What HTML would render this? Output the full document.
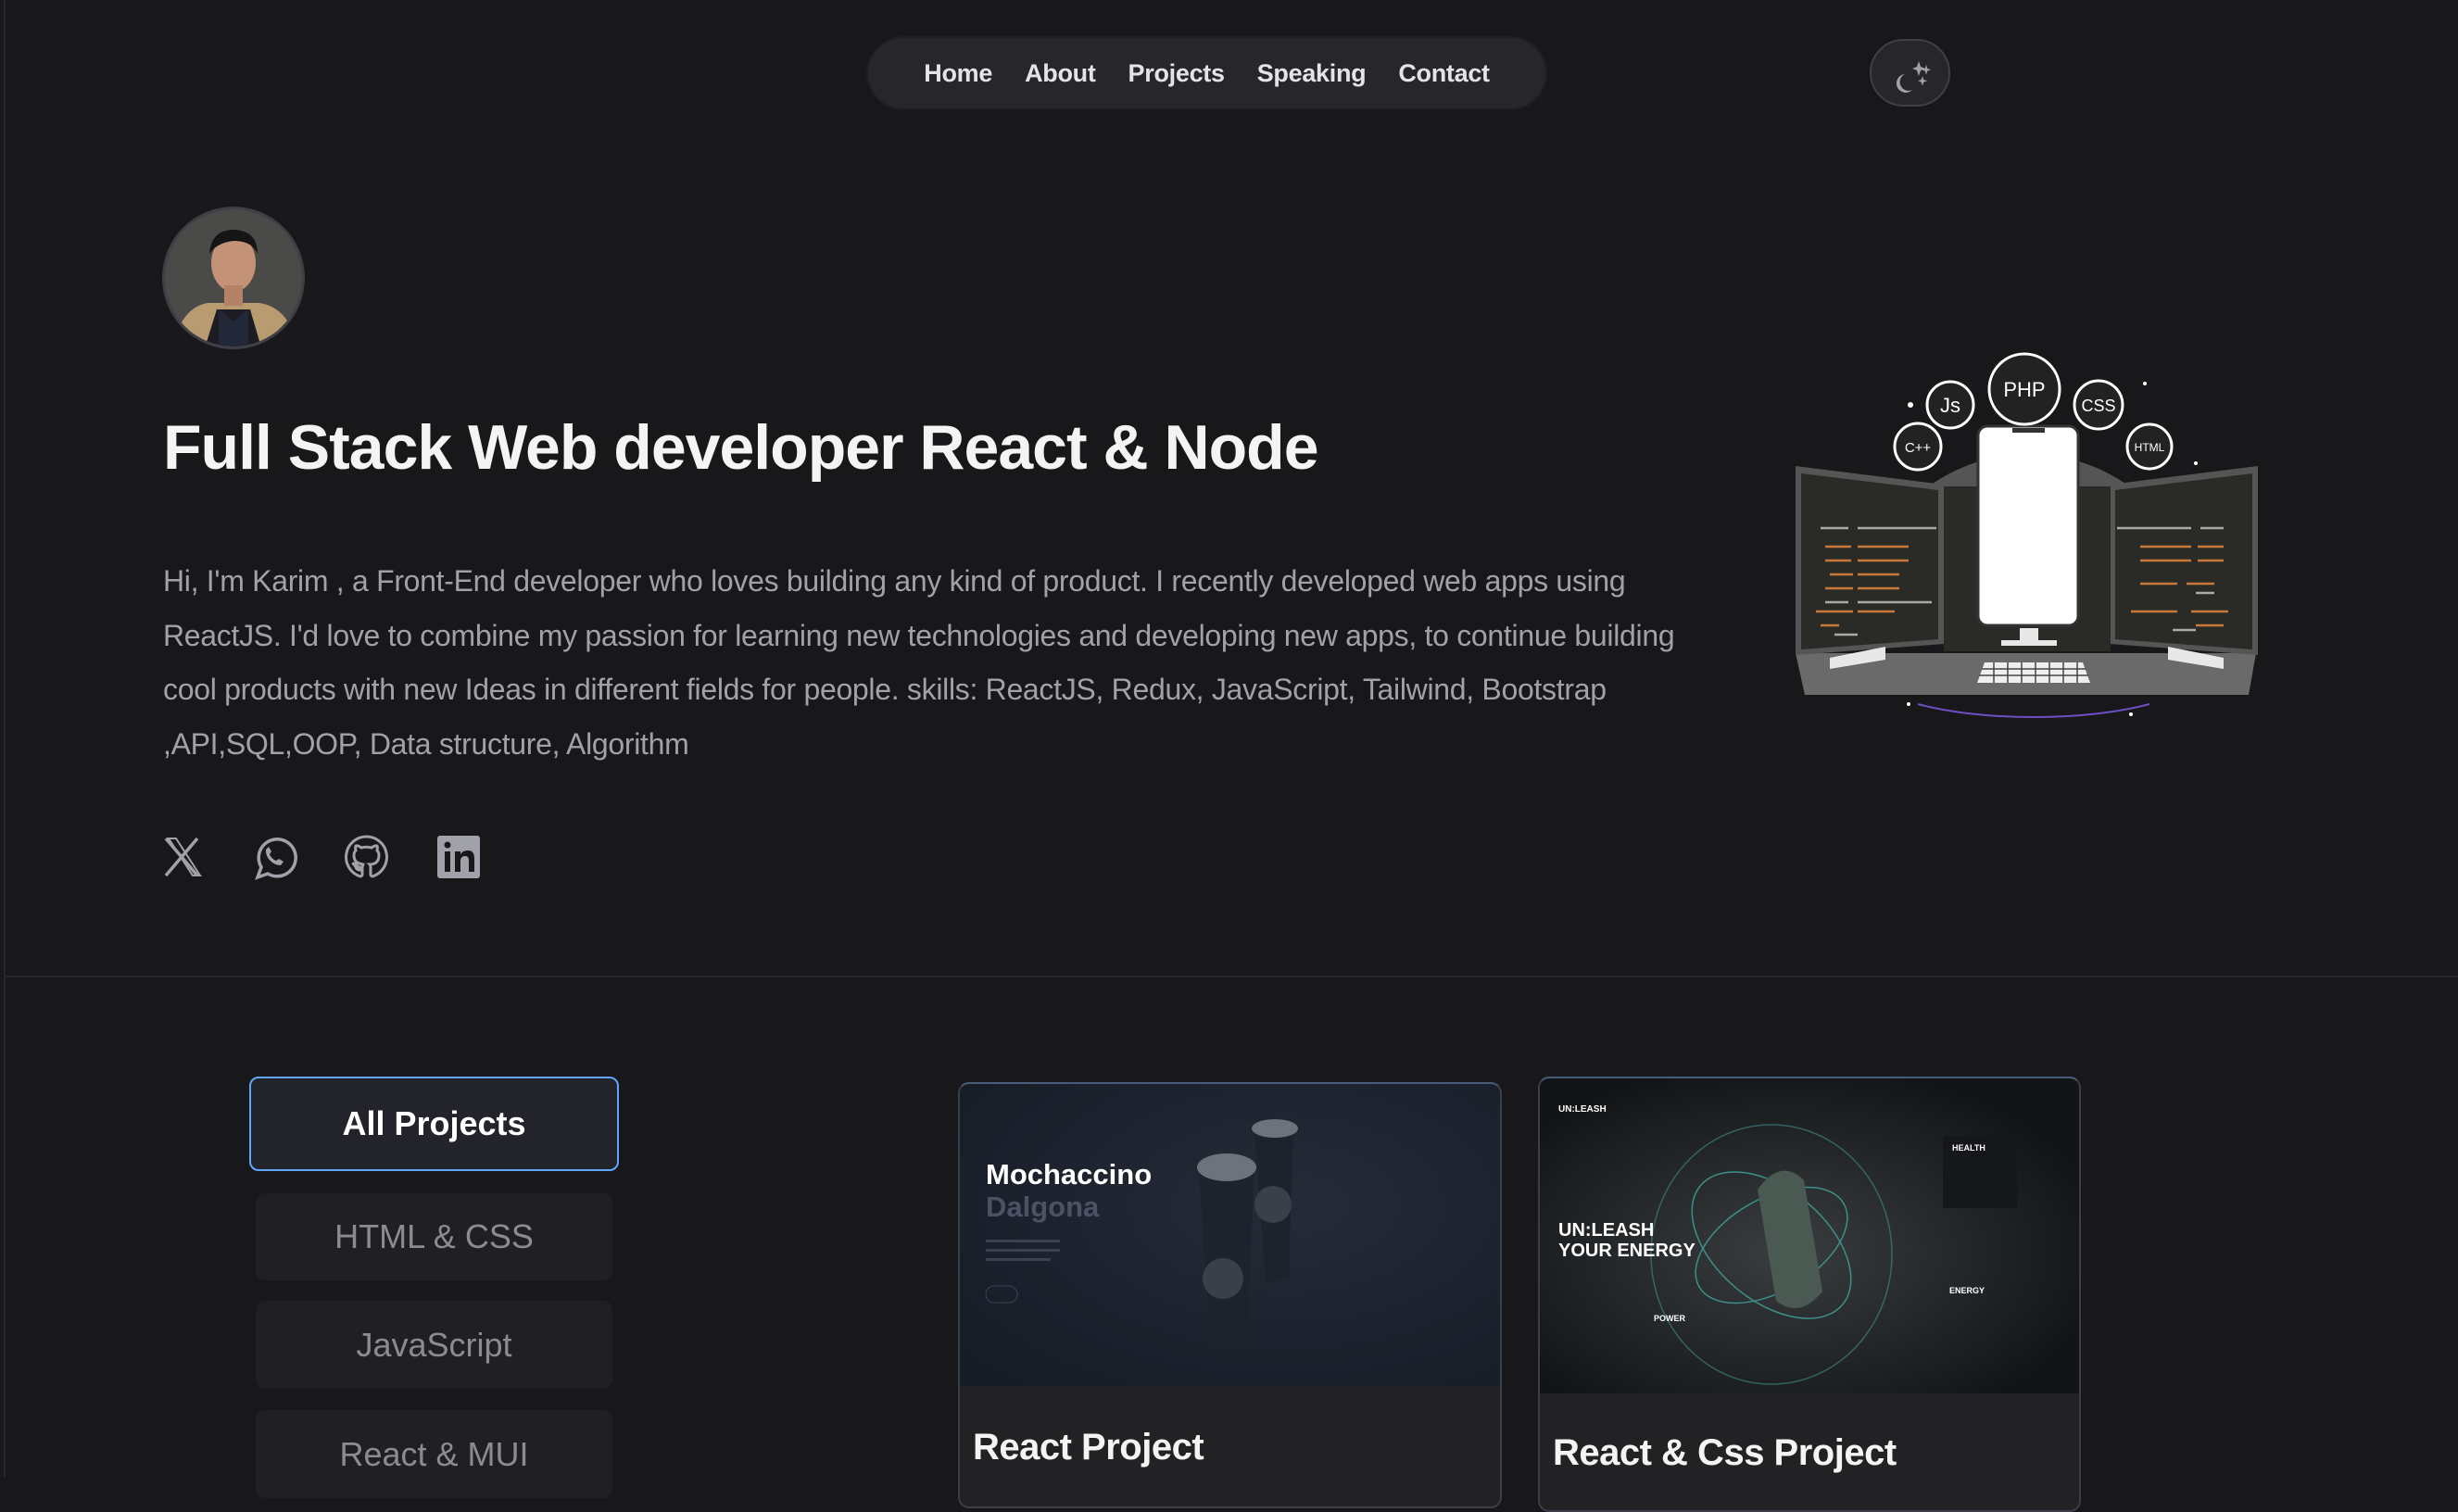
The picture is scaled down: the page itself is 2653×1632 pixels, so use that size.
<!DOCTYPE html>
<html><head><meta charset="utf-8"><style>
*{margin:0;padding:0;box-sizing:border-box}
body{width:2653px;height:1594px;background:#18181b;font-family:"Liberation Sans",Arial,sans-serif;position:relative;overflow:hidden}
.abs{position:absolute}
.vline{left:4px;top:0;width:2px;height:1594px;background:#27272a}
.nav{left:937px;top:41px;width:731px;height:76px;border-radius:38px;background:#27272a;box-shadow:0 0 0 2px #1f1f22;display:flex;align-items:center;justify-content:center;gap:35px;font-size:27px;font-weight:bold;color:#e4e4e7;letter-spacing:-0.3px}
.theme{left:2018px;top:42px;width:87px;height:73px;border-radius:37px;border:2px solid #3f3f46;background:#27272a}
h1{position:absolute;left:176px;top:444px;font-size:68px;color:#f4f4f5;font-weight:bold;letter-spacing:-1px;white-space:nowrap}
.p{left:176px;top:598px;font-size:32px;line-height:58.5px;color:#a1a1aa;white-space:nowrap;letter-spacing:-0.3px}
.div{left:6px;top:1053px;width:2647px;height:2px;background:#27272a}
.btn{position:absolute;display:flex;align-items:center;justify-content:center;border-radius:10px;font-size:36px;background:#1f1f24;color:#8b8b93}
.card{position:absolute;border:2px solid #3b3f48;border-top-color:#4a5d78;border-radius:12px;background:#222225;overflow:hidden}
.ct{position:absolute;left:14px;font-size:40px;font-weight:bold;color:#f4f4f5;letter-spacing:-0.5px}
</style></head><body>
<div class="abs vline"></div>
<div class="abs nav"><span>Home</span><span>About</span><span>Projects</span><span>Speaking</span><span>Contact</span></div>
<div class="abs theme"><svg width="87" height="73" viewBox="0 0 87 73"><path d="M36 36a10 10 0 1 0 8 17a9 9 0 0 1-8-17z" fill="#a1a1aa"/><path d="M51 22l2 6 5 2-5 2-2 6-2-6-5-2 5-2z M59 26l1.3 4 3.7 1.3-3.7 1.3-1.3 4-1.3-4-3.7-1.3 3.7-1.3z M55 38l1.3 4 3.7 1.3-3.7 1.3-1.3 4-1.3-4-3.7-1.3 3.7-1.3z" fill="#a1a1aa"/></svg></div>

<svg class="abs" style="left:174px;top:222px" width="156" height="156" viewBox="0 0 156 156">
<defs><clipPath id="c"><circle cx="78" cy="78" r="74"/></clipPath></defs>
<circle cx="78" cy="78" r="77" fill="#3f3f46"/>
<g clip-path="url(#c)"><rect width="156" height="156" fill="#4a4a48"/>
<path d="M10 160 Q20 110 50 105 L106 105 Q140 110 150 160z" fill="#b89b70"/>
<path d="M45 160 L60 112 L96 112 L110 160z" fill="#1c1c22"/>
<path d="M62 112 L78 125 L94 112 L94 160 L62 160z" fill="#222838"/>
<ellipse cx="78" cy="62" rx="24" ry="31" fill="#c49277"/>
<path d="M52 52 Q54 25 80 26 Q104 28 104 52 Q98 38 78 38 Q60 40 52 52z" fill="#151515"/>
<rect x="68" y="86" width="20" height="22" fill="#b58268"/>
</g></svg>

<h1>Full Stack Web developer React &amp; Node</h1>
<div class="abs p">Hi, I'm Karim , a Front-End developer who loves building any kind of product. I recently developed web apps using<br>ReactJS. I'd love to combine my passion for learning new technologies and developing new apps, to continue building<br>cool products with new Ideas in different fields for people. skills: ReactJS, Redux, JavaScript, Tailwind, Bootstrap<br>,API,SQL,OOP, Data structure, Algorithm</div>

<svg class="abs" style="left:176px;top:900px" width="360" height="50" viewBox="0 0 360 50">
<g fill="none" stroke="#a1a1aa" stroke-width="3.5">
<path d="M3 5 L37 45 M37 5 L3 45" /><path d="M6 5h8l26 40h-8z" stroke-width="2"/>
<path d="M102 47 L106 36 A20 20 0 1 1 113 43 Z" stroke-width="3.5"/>
</g>
<path d="M111 17c-1 8 7 17 16 17l3-4-5-3-3 2c-3-1-6-4-7-7l2-3-3-5z" fill="#a1a1aa"/>
<path d="M220 3a22 22 0 0 0-7 43c1 0 2-1 2-2v-5c-6 1-7-3-7-3-1-2-2-3-2-3-2-1 0-1 0-1 2 0 3 2 3 2 2 3 5 2 6 2 0-1 1-2 1-3-5-1-10-2-10-10 0-2 1-4 2-5 0-1-1-3 0-5 0 0 2-1 6 2a20 20 0 0 1 11 0c4-3 6-2 6-2 1 2 0 4 0 5 1 1 2 3 2 5 0 8-5 10-10 10 1 1 1 2 1 4v7c0 1 1 2 2 2a22 22 0 0 0-7-43z" fill="none" stroke="#a1a1aa" stroke-width="3"/>
<rect x="296" y="2" width="46" height="46" rx="3" fill="#a1a1aa"/>
<rect x="304" y="19" width="6" height="22" fill="#18181b"/><circle cx="307" cy="12" r="3.5" fill="#18181b"/>
<path d="M315 19h6v3c2-3 5-4 8-4 5 0 7 3 7 9v14h-6V29c0-3-1-5-4-5s-5 2-5 5v12h-6z" fill="#18181b"/>
</svg>

<svg class="abs" style="left:1930px;top:375px" width="520" height="410" viewBox="0 0 520 410">
<path d="M60 290 A205 205 0 0 1 460 290" fill="none" stroke="#6d4fc4" stroke-width="2"/>
<path d="M140 385 A180 50 0 0 0 390 385" fill="none" stroke="#6d4fc4" stroke-width="2"/>
<path d="M75 300 A185 185 0 0 1 445 300 L445 320 L75 320z" fill="#555"/>
<g fill="#fff"><circle cx="132" cy="62" r="3"/><circle cx="385" cy="39" r="2"/><circle cx="440" cy="125" r="2"/><circle cx="30" cy="340" r="2"/><circle cx="130" cy="385" r="2"/><circle cx="370" cy="396" r="2"/></g>
<path d="M8 330 L505 330 L497 375 L18 375z" fill="#6a6a6a"/>
<path d="M8 128 L168 148 L168 320 L8 332z" fill="#555"/>
<path d="M14 136 L162 154 L162 315 L14 326z" fill="#2a2a26"/>
<path d="M507 128 L347 148 L347 320 L507 332z" fill="#555"/>
<path d="M501 136 L353 154 L353 315 L501 326z" fill="#2a2a26"/>
<rect x="168" y="150" width="180" height="178" fill="#2a2a26"/>
<g stroke="#c87838" stroke-width="2.5"><path d="M40 215h28M75 215h55M40 230h28M75 230h55M45 245h25M75 245h45M40 260h30M75 260h45M30 285h40M75 285h40M35 300h20M470 215h-28M435 215h-55M470 230h-28M435 230h-55M460 255h-30M420 255h-40M475 285h-40M420 285h-50M470 300h-30"/></g>
<g stroke="#aaa" stroke-width="2.5"><path d="M35 195h30M75 195h85M470 195h-25M435 195h-80M40 275h25M75 275h80M460 265h-20M50 310h25M440 305h-25"/></g>
<rect x="205" y="85" width="108" height="215" rx="10" fill="#fff" stroke="#333" stroke-width="3"/>
<path d="M242 87h35v5h-35z" fill="#333"/>
<rect x="250" y="303" width="20" height="15" fill="#e8e8e8"/><rect x="230" y="316" width="60" height="6" fill="#e8e8e8"/>
<path d="M45 335 l60-12 0 14-60 10z" fill="#e8e8e8"/><path d="M470 335 l-60-12 0 14 60 10z" fill="#e8e8e8"/>
<path d="M212 340 L318 340 L326 362 L204 362z" fill="#eee"/>
<g stroke="#444" stroke-width="1.5"><path d="M209 347h112M206 354h118"/><path d="M222 340v22M237 340v22M252 340v22M267 340v22M282 340v22M297 340v22M312 340v22"/></g>
<g stroke="#fff" stroke-width="3" fill="#222"><circle cx="140" cy="107" r="25"/><circle cx="175" cy="62" r="25"/><circle cx="255" cy="45" r="38"/><circle cx="335" cy="62" r="26"/><circle cx="390" cy="107" r="24"/></g>
<g fill="#fff" font-family="Liberation Sans,sans-serif" text-anchor="middle"><text x="140" y="113" font-size="15">C++</text><text x="175" y="70" font-size="22">Js</text><text x="255" y="53" font-size="22">PHP</text><text x="335" y="69" font-size="18">CSS</text><text x="390" y="112" font-size="12">HTML</text></g>
</svg>

<div class="abs div"></div>

<div class="btn" style="left:269px;top:1162px;width:399px;height:102px;border:2px solid #60a5fa;background:#23232b;color:#fff;font-weight:bold">All Projects</div>
<div class="btn" style="left:276px;top:1288px;width:385px;height:94px">HTML &amp; CSS</div>
<div class="btn" style="left:276px;top:1404px;width:385px;height:95px">JavaScript</div>
<div class="btn" style="left:276px;top:1522px;width:385px;height:95px">React &amp; MUI</div>

<div class="card" style="left:1034px;top:1168px;width:587px;height:460px">
<svg width="587" height="326" viewBox="0 0 587 326" style="display:block">
<defs><radialGradient id="g1" cx="0.6" cy="0.4" r="0.8"><stop offset="0" stop-color="#252b38"/><stop offset="1" stop-color="#161b26"/></radialGradient></defs>
<rect width="587" height="326" fill="url(#g1)"/>
<text x="28" y="108" font-family="Liberation Sans,sans-serif" font-weight="bold" font-size="31" fill="#fff">Mochaccino</text>
<text x="28" y="143" font-family="Liberation Sans,sans-serif" font-weight="bold" font-size="31" fill="#4a5264">Dalgona</text>
<g fill="#3a4150"><rect x="28" y="168" width="80" height="3"/><rect x="28" y="178" width="80" height="3"/><rect x="28" y="188" width="70" height="3"/></g>
<rect x="28" y="218" width="34" height="18" rx="9" fill="none" stroke="#3a4150"/>
<path d="M258 90 L318 85 L310 285 L270 290z" fill="#1d222c"/>
<ellipse cx="288" cy="90" rx="32" ry="15" fill="#6e737b"/>
<path d="M318 50 L360 45 L355 210 L330 215z" fill="#1d222c"/>
<ellipse cx="340" cy="48" rx="25" ry="10" fill="#6e737b"/>
<circle cx="284" cy="210" r="22" fill="#3a3f48"/><circle cx="338" cy="130" r="20" fill="#3a3f48"/>
</svg>
<div class="ct" style="top:370px">React Project</div>
</div>

<div class="card" style="left:1660px;top:1162px;width:586px;height:470px">
<svg width="586" height="340" viewBox="0 0 586 340" style="display:block">
<defs><radialGradient id="g2" cx="0.45" cy="0.55" r="0.6"><stop offset="0" stop-color="#3a3d3f"/><stop offset="1" stop-color="#121416"/></radialGradient></defs>
<rect width="586" height="340" fill="url(#g2)"/>
<g fill="none" stroke="#3d8f8a" stroke-width="1.5"><ellipse cx="250" cy="190" rx="130" ry="140" opacity=".6"/><ellipse cx="250" cy="180" rx="90" ry="50" transform="rotate(-30 250 180)"/><ellipse cx="250" cy="180" rx="100" ry="60" transform="rotate(40 250 180)"/></g>
<path d="M235 120 Q260 85 285 110 L305 230 Q280 260 255 240z" fill="#4a5a52"/>
<text x="20" y="36" font-family="Liberation Sans,sans-serif" font-weight="bold" font-size="10" fill="#fff">UN:LEASH</text>
<text x="20" y="170" font-family="Liberation Sans,sans-serif" font-weight="bold" font-size="20" fill="#fff">UN:LEASH</text>
<text x="20" y="192" font-family="Liberation Sans,sans-serif" font-weight="bold" font-size="20" fill="#fff">YOUR ENERGY</text>
<text x="123" y="262" font-family="Liberation Sans,sans-serif" font-weight="bold" font-size="9" fill="#fff">POWER</text>
<text x="442" y="232" font-family="Liberation Sans,sans-serif" font-weight="bold" font-size="9" fill="#fff">ENERGY</text>
<rect x="435" y="62" width="80" height="78" fill="#15171a"/>
<text x="445" y="78" font-family="Liberation Sans,sans-serif" font-weight="bold" font-size="9" fill="#fff">HEALTH</text>
</svg>
<div class="ct" style="top:382px">React &amp; Css Project</div>
</div>
</body></html>
